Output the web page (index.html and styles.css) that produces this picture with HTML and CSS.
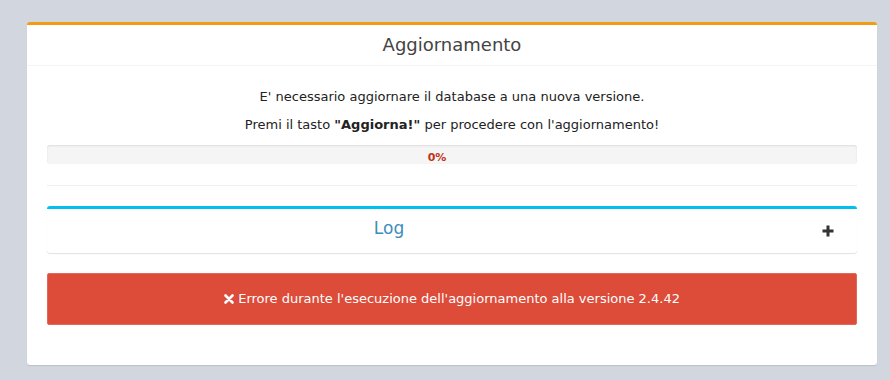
FILE: index.html
```html
<!DOCTYPE html>
<html lang="it">
<head>
<meta charset="utf-8">
<title>Aggiornamento</title>
<link rel="stylesheet" href="styles.css">
</head>
<body>
<div class="box box-warning">
  <div class="box-header">
    <h3 class="box-title">Aggiornamento</h3>
  </div>
  <div class="box-body">
    <p class="msg">E' necessario aggiornare il database a una nuova versione.</p>
    <p class="msg">Premi il tasto <b>"Aggiorna!"</b> per procedere con l'aggiornamento!</p>
    <div class="progress"><span class="progress-label">0%</span></div>
    <hr class="sep">
    <div class="box box-info log-box">
      <div class="log-header">
        <h3 class="log-title">Log</h3>
        <span class="box-tools">
          <svg width="12" height="12" viewBox="0 0 12 12"><path d="M4.5 0.5h3v4h4v3h-4v4h-3v-4h-4v-3h4z" fill="#333"/></svg>
        </span>
      </div>
    </div>
    <div class="callout-danger">
      <svg class="x" width="10" height="10" viewBox="0 0 10 10"><path d="M1.5 1.5l7 7M8.5 1.5l-7 7" stroke="#fff" stroke-width="2.6" stroke-linecap="round"/></svg> Errore durante l'esecuzione dell'aggiornamento alla versione 2.4.42
    </div>
  </div>
</div>
</body>
</html>
```
FILE: styles.css
```css
html, body {
  margin: 0;
  padding: 0;
}
body {
  background: #d2d6de;
  font-family: "DejaVu Sans", Verdana, sans-serif;
  font-size: 13px;
  color: #333;
  padding: 22px 13px 0 27px;
  height: 380px;
  box-sizing: border-box;
}
.box {
  background: #fff;
  border-top: 3px solid #f39c12;
  border-radius: 3px;
  box-shadow: 0 1px 1px rgba(0,0,0,0.1);
}
.box-header {
  padding: 10px;
  border-bottom: 1px solid #f4f4f4;
  text-align: center;
}
.box-title {
  margin: 0;
  font-size: 18px;
  font-weight: normal;
  line-height: 20px;
  color: #444;
}
.box-body {
  padding: 22px 20px 40px;
}
.msg {
  margin: 0 0 10px;
  line-height: 18px;
  text-align: center;
  color: #222;
}
.progress {
  height: 19px;
  margin-top: 11px;
  background: #f5f5f5;
  border-radius: 3px;
  box-shadow: inset 0 1px 2px rgba(0,0,0,0.1);
  display: flex;
  align-items: center;
  justify-content: center;
  padding-right: 30px;
}
.progress-label {
  font-size: 11px;
  font-weight: bold;
  color: #c23321;
  line-height: 19px;
  padding-top: 6px;
}
.sep {
  border: 0;
  border-top: 1px solid #eee;
  margin: 21px 0 20px;
}
.log-box {
  border-top-color: #00c0ef;
  position: relative;
  margin-bottom: 20px;
  box-shadow: 0 1px 1px rgba(0,0,0,0.12);
}
.log-header {
  padding: 9px 136px 11px 10px;
  text-align: center;
}
.log-title {
  margin: 0;
  font-size: 17px;
  font-weight: normal;
  line-height: 20px;
  color: #3c8dbc;
  padding-bottom: 4px;
}
.box-tools {
  position: absolute;
  right: 23px;
  top: 16px;
  display: flex;
}
.callout-danger {
  background: #dd4b39;
  border: 1px solid #e46859;
  border-radius: 2px;
  color: #fff;
  text-align: center;
  line-height: 18px;
  padding: 16px 15px 16px;
}
.x {
  vertical-align: -1px;
}
```
